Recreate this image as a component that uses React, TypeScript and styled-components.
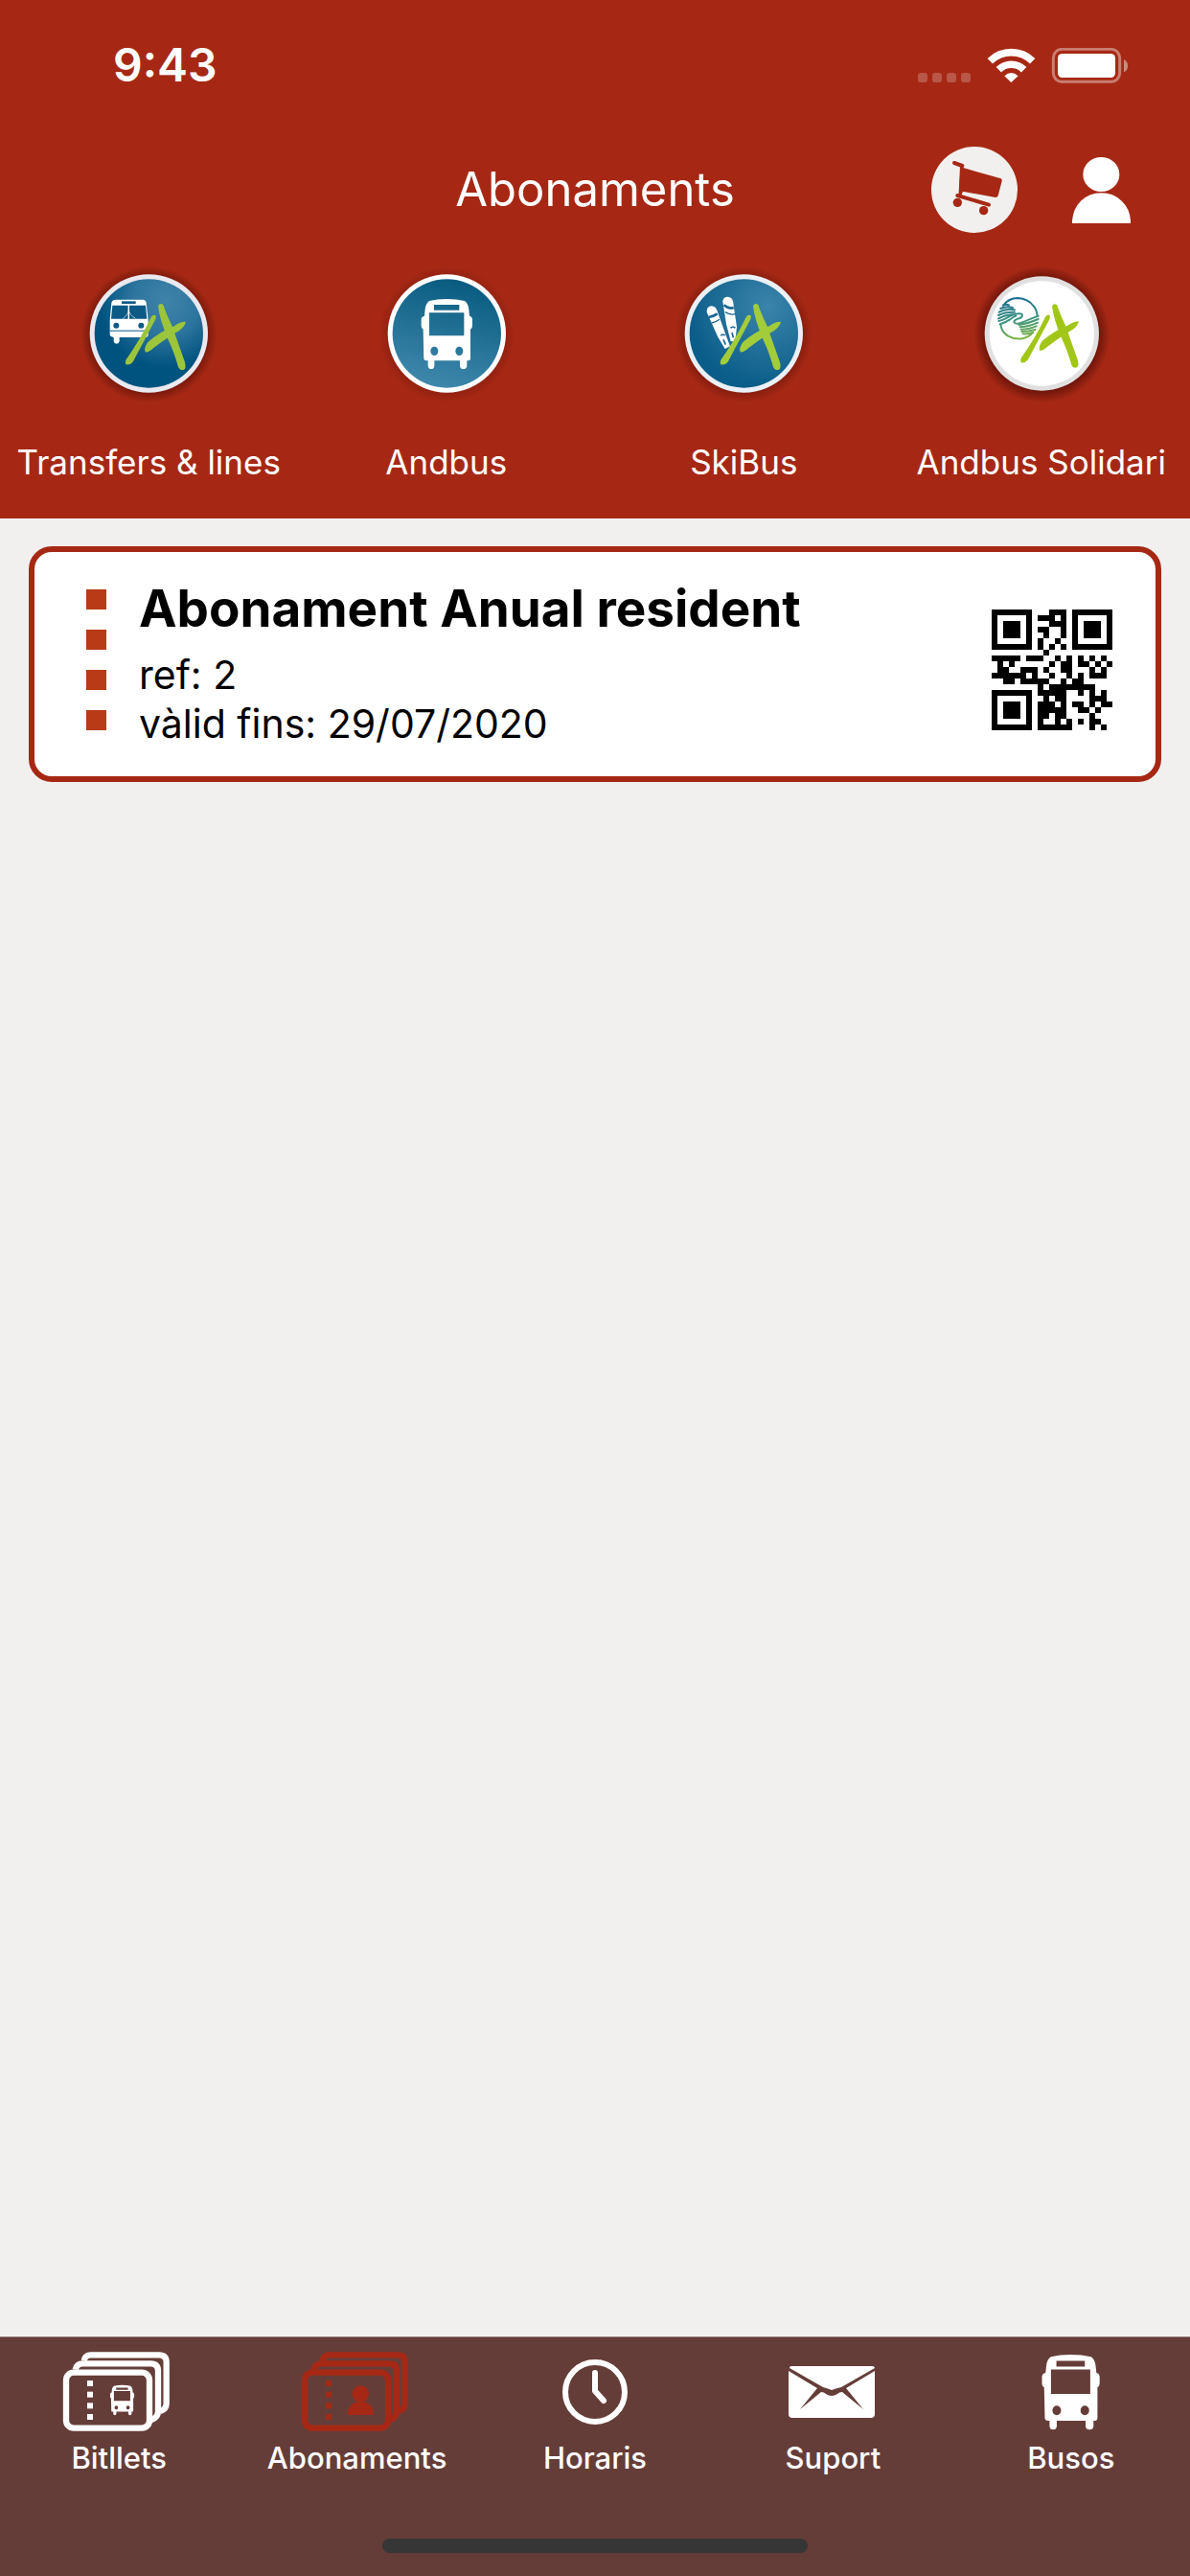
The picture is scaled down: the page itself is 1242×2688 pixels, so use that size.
import React from 'react';
import styled, { createGlobalStyle } from 'styled-components';

const red = '#a62814';
const paper = '#f1f0ee';
const green = '#9bc53b';

const GlobalStyle = createGlobalStyle`
  *, *::before, *::after { box-sizing: border-box; }
  body {
    margin: 0;
    background: ${paper};
    font-family: Inter, Roboto, "Liberation Sans", sans-serif;
  }
  h1, h2, p, ul { margin: 0; padding: 0; }
  button { font: inherit; color: inherit; border: 0; padding: 0; background: none; cursor: pointer; }
  a { color: inherit; text-decoration: none; }
  svg { display: block; flex: none; }
`;

const Screen = styled.div`
  display: flex;
  flex-direction: column;
  min-height: 100vh;
`;

const Header = styled.header`
  background: ${red};
  color: #fff;
`;

const StatusBar = styled.div`
  display: flex;
  align-items: center;
  justify-content: space-between;
  padding: 38px 65px 34px 118px;
`;

const Clock = styled.time`
  font-size: 48px;
  line-height: 60px;
  font-weight: 600;
`;

const NavBar = styled.div`
  display: grid;
  grid-template-columns: 1fr auto 1fr;
  align-items: center;
  height: 132px;
`;

const ScreenTitle = styled.h1`
  grid-column: 2;
  font-size: 49px;
  line-height: 60px;
  font-weight: 400;
`;

const Actions = styled.div`
  display: flex;
  align-items: center;
  justify-content: flex-end;
  gap: 57px;
  padding-right: 62px;
`;

const Services = styled.nav`
  display: grid;
  grid-template-columns: repeat(4, 1fr);
  padding: 12px 0 37px;
`;

const Service = styled.button`
  display: flex;
  flex-direction: column;
  align-items: center;
  gap: 40px;
  font-size: 35px;
  line-height: 44px;
  white-space: nowrap;
`;

const Content = styled.main`
  flex: 1;
  padding: 29px 30px;
`;

const Pass = styled.article`
  display: flex;
  align-items: flex-end;
  gap: 34px;
  padding: 27px 45px 29px 54px;
  background: #fff;
  border: 6px solid ${red};
  border-radius: 24px;
`;

const Perforation = styled.div`
  display: flex;
  flex-direction: column;
  gap: 21px;
  padding-bottom: 19px;
`;

const Hole = styled.span`
  width: 21px;
  height: 21px;
  background: #b83a17;
`;

const PassText = styled.div`
  flex: 1;
  font-size: 41px;
  line-height: 51px;
  color: #000;
`;

const PassTitle = styled.h2`
  margin-bottom: 12px;
  font-size: 53px;
  line-height: 64px;
  font-weight: 700;
`;

const PassCode = styled.div`
  padding-bottom: 19px;
`;

const Footer = styled.footer`
  display: flex;
  flex-direction: column;
  align-items: center;
  gap: 66px;
  padding: 15px 0 24px;
  border-top: 1px solid #9c8481;
  background: #653d38;
  color: #fff;
`;

const TabBar = styled.nav`
  display: grid;
  grid-template-columns: repeat(5, 1fr);
  width: 100%;
`;

const Tab = styled.a`
  display: flex;
  flex-direction: column;
  align-items: center;
  gap: 9px;
  font-size: 31px;
  line-height: 36px;
  font-weight: 500;
`;

const HomeIndicator = styled.div`
  width: 444px;
  height: 15px;
  border-radius: 8px;
  background: #363636;
`;

/* ---------- QR code, version 1, level L, mask 2 ---------- */

const QR_SIZE = 21;
const DATA_WORDS = 19;
const EC_WORDS = 7;
const FORMAT_BITS = '111110110101010';

function gfMultiply(a: number, b: number): number {
  let product = 0;
  for (let i = 7; i >= 0; i--) {
    product = (product << 1) ^ ((product >>> 7) * 0x11d);
    product ^= ((b >>> i) & 1) * a;
  }
  return product & 0xff;
}

function errorCorrection(data: number[]): number[] {
  const divisor: number[] = new Array(EC_WORDS).fill(0);
  divisor[EC_WORDS - 1] = 1;
  let root = 1;
  for (let i = 0; i < EC_WORDS; i++) {
    for (let j = 0; j < EC_WORDS; j++) {
      divisor[j] = gfMultiply(divisor[j], root);
      if (j + 1 < EC_WORDS) divisor[j] ^= divisor[j + 1];
    }
    root = gfMultiply(root, 2);
  }
  const rest: number[] = new Array(EC_WORDS).fill(0);
  data.forEach((word) => {
    const factor = word ^ (rest.shift() as number);
    rest.push(0);
    divisor.forEach((d, i) => {
      rest[i] ^= gfMultiply(d, factor);
    });
  });
  return rest;
}

const toBits = (n: number, length: number) => n.toString(2).padStart(length, '0');

function encodeQr(value: string): boolean[][] {
  const grid: (boolean | null)[][] = Array.from({ length: QR_SIZE }, () =>
    new Array(QR_SIZE).fill(null),
  );
  const last = QR_SIZE - 1;

  const finder = (cy: number, cx: number) => {
    for (let dy = -4; dy <= 4; dy++) {
      for (let dx = -4; dx <= 4; dx++) {
        const y = cy + dy;
        const x = cx + dx;
        if (y < 0 || x < 0 || y > last || x > last) continue;
        const ring = Math.max(Math.abs(dy), Math.abs(dx));
        grid[y][x] = ring !== 2 && ring !== 4;
      }
    }
  };
  finder(3, 3);
  finder(3, last - 3);
  finder(last - 3, 3);

  for (let i = 8; i <= 12; i++) {
    grid[6][i] = i % 2 === 0;
    grid[i][6] = i % 2 === 0;
  }

  const around = [0, 1, 2, 3, 4, 5, 7, 8];
  for (let i = 0; i < 15; i++) {
    const on = FORMAT_BITS[i] === '1';
    if (i < 8) grid[8][around[i]] = on;
    else grid[around[14 - i]][8] = on;
    if (i < 7) grid[last - i][8] = on;
    else grid[8][last - 14 + i] = on;
  }
  grid[13][8] = true;

  let bits = '0100' + toBits(value.length, 8);
  for (const ch of value) bits += toBits(ch.charCodeAt(0), 8);
  bits += '0000';
  const data: number[] = [];
  for (let i = 0; i + 8 <= bits.length; i += 8) data.push(parseInt(bits.slice(i, i + 8), 2));
  for (let pad = 0xec; data.length < DATA_WORDS; pad ^= 0xec ^ 0x11) data.push(pad);
  const stream = [...data, ...errorCorrection(data)].map((w) => toBits(w, 8)).join('');

  let index = 0;
  let upward = true;
  for (let right = last; right > 0; right -= 2) {
    if (right === 6) right = 5;
    for (let step = 0; step < QR_SIZE; step++) {
      const y = upward ? last - step : step;
      for (const x of [right, right - 1]) {
        if (grid[y][x] !== null) continue;
        const bit = stream[index++] === '1';
        grid[y][x] = x % 3 === 0 ? !bit : bit;
      }
    }
    upward = !upward;
  }
  return grid.map((row) => row.map(Boolean));
}

function QrCode({ value }: { value: string }) {
  const path = encodeQr(value)
    .flatMap((row, y) => row.map((on, x) => (on ? `M${x} ${y}h1v1h-1z` : '')))
    .join('');
  return (
    <svg
      width="126"
      height="126"
      viewBox="0 0 21 21"
      shapeRendering="crispEdges"
      role="img"
      aria-label="Codi QR"
    >
      <path d={path} />
    </svg>
  );
}

/* ---------- Icons ---------- */

function StatusIcons() {
  return (
    <svg width="219" height="37" viewBox="174 87 657 111" fill="#fff" aria-hidden="true">
      <g opacity="0.22">
        {[174, 219, 264, 309].map((x) => (
          <rect key={x} x={x} y="165" width="30" height="30" rx="10" />
        ))}
      </g>
      <g fill="none" stroke="#fff" strokeWidth="23">
        <path d="M400 128 A95 95 0 0 1 533 128" />
        <path d="M427 155 A56 56 0 0 1 506 155" />
      </g>
      <path d="M466 195 L445 175 Q466 155 488 175 Z" />
      <rect
        x="598"
        y="91"
        width="208"
        height="102"
        rx="27"
        fill="none"
        stroke="#fff"
        strokeWidth="9"
        opacity="0.4"
      />
      <rect x="612" y="105" width="180" height="75" rx="14" />
      <path d="M819 123 Q831 129 831 143 Q831 157 819 163 Z" opacity="0.45" />
    </svg>
  );
}

function CartIcon() {
  return (
    <svg width="90" height="90" viewBox="216 399 270 270" aria-hidden="true">
      <circle cx="351" cy="534" r="135" fill={paper} />
      <g fill={red}>
        <path d="M308 463 L434 499 Q438 501 437 507 L425 553 Q423 558 417 558 L318 540 Q313 539 311 548 L302 548 Z" />
        <circle cx="298" cy="574" r="14" />
        <circle cx="380" cy="599" r="14" />
      </g>
      <g fill="none" stroke={red} strokeLinecap="round" strokeLinejoin="round">
        <path d="M288 450 L313 459" strokeWidth="12" />
        <path d="M311 460 L307 545" strokeWidth="10" />
        <path d="M298 552 L396 581" strokeWidth="12" />
      </g>
    </svg>
  );
}

function PersonIcon() {
  return (
    <svg width="61" height="69" viewBox="657 429 183 207" fill="#fff" aria-hidden="true">
      <ellipse cx="748" cy="483" rx="57" ry="54" />
      <path d="M657 636 V628 Q660 590 684 566 Q712 541 748 541 Q786 541 812 566 Q838 590 840 628 V636 Z" />
    </svg>
  );
}

function BusShape() {
  return (
    <g>
      <path
        fillRule="evenodd"
        d="M399 190 Q401 170 412 163 Q436 157 467 157 Q498 157 523 163 Q534 170 536 190 L538 210 Q547 212 547 222 V240 Q547 250 541 252 V344 Q541 350 535 350 H530 V366 Q529 376 519 376 Q509 376 508 366 V350 H428 V366 Q427 376 418 376 Q409 376 408 366 V350 H402 Q396 350 395 344 L393 252 Q387 250 387 240 V222 Q387 212 397 210 Z
           M427 175 V192 H506 V175 Z
           M412 200 V272 H521 V200 Z
           M416 320 a12 14 0 1 0 24 0 a12 14 0 1 0 -24 0 Z
           M494 320 a12 14 0 1 0 24 0 a12 14 0 1 0 -24 0 Z"
      />
    </g>
  );
}

function Strokes({ color }: { color: string }) {
  return (
    <g fill={color}>
      <path d="M474 214 Q481 203 489 209 Q491 215 485 226 L417 354 Q408 365 395 362 Q391 356 396 346 Q440 285 474 214 Z" />
      <path d="M496 178 Q502 167 512 175 Q520 200 540 242 L580 355 Q585 376 575 379 Q564 381 559 369 Q545 320 528 285 Q500 220 496 178 Z" />
      <path d="M583 229 Q570 226 548 241 Q500 260 464 292 Q450 312 456 323 Q466 325 482 310 Q510 288 548 264 Q578 250 583 229 Z" />
    </g>
  );
}

type BadgeProps = {
  id: string;
  ring: string;
  radius?: number;
  fill: React.ReactNode;
  shade?: number;
  children: React.ReactNode;
};

function Badge({ id, ring, radius = 185, fill, shade = 0.5, children }: BadgeProps) {
  return (
    <svg width="144" height="144" viewBox="250 49 432 432" aria-hidden="true">
      <defs>
        <radialGradient id={`${id}-shade`}>
          <stop offset="0.8" stopColor="#300" stopOpacity={shade} />
          <stop offset="1" stopColor="#300" stopOpacity="0" />
        </radialGradient>
        {fill}
      </defs>
      <circle cx="467" cy="268" r="214" fill={`url(#${id}-shade)`} />
      <circle cx="467" cy="265" r={radius} fill={ring} />
      <circle cx="467" cy="265" r={radius - 15} fill={`url(#${id})`} />
      {children}
    </svg>
  );
}

function TransfersIcon() {
  return (
    <Badge
      id="transfers"
      ring="#e9e9ef"
      fill={
        <radialGradient id="transfers" cx="0.66" cy="0.2" r="0.62">
          <stop offset="0" stopColor="#3f83a9" />
          <stop offset="0.5" stopColor="#2d759e" />
          <stop offset="1" stopColor="#00527f" />
        </radialGradient>
      }
    >
      <path
        fill="#fff"
        d="M350 170 Q352 159 362 159 H448 Q458 159 459 170 L465 222 V270 Q463 277 456 277 H375 V290 Q373 297 366 297 Q358 297 357 290 V277 Q345 275 345 268 V222 Z"
      />
      <g fill="#0b5a86">
        <rect x="382" y="164" width="44" height="8" />
        <path d="M353 177 H402 V219 H349 Z M406 177 H457 L461 219 H406 Z" />
        <circle cx="365" cy="240" r="9" />
        <circle cx="443" cy="240" r="9" />
        <rect x="345" y="255" width="115" height="3" />
      </g>
      <path
        d="M404 180 V219 M404 190 Q402 208 385 219 M404 190 Q406 208 425 217"
        fill="none"
        stroke="#fff"
        strokeOpacity="0.6"
        strokeWidth="3"
      />
      <Strokes color={green} />
    </Badge>
  );
}

function AndbusIcon() {
  return (
    <Badge
      id="andbus"
      ring="#fff"
      shade={0.22}
      fill={
        <linearGradient id="andbus" x1="0.65" y1="0" x2="0.4" y2="1">
          <stop offset="0" stopColor="#075b7f" />
          <stop offset="1" stopColor="#3f88ac" />
        </linearGradient>
      }
    >
      <g fill="#fff">
        <BusShape />
      </g>
    </Badge>
  );
}

function SkiBusIcon() {
  return (
    <Badge
      id="skibus"
      ring="#eaf0f5"
      shade={0.35}
      fill={
        <radialGradient id="skibus" cx="0.72" cy="0.25" r="0.75">
          <stop offset="0" stopColor="#3b84ab" />
          <stop offset="1" stopColor="#0a5d89" />
        </radialGradient>
      }
    >
      <g fill="#fff">
        <path d="M351 198 Q350 180 366 179 Q378 180 383 192 L410 268 L424 305 L408 313 L386 276 Z" />
        <path d="M401 164 Q402 150 417 150 Q430 151 433 164 L445 245 L440 288 L426 290 L412 236 Z" />
      </g>
      <g fill="none" stroke="#1a6891">
        <path d="M357 214 Q372 212 384 203 M405 176 Q420 190 435 184" strokeWidth="8" />
        <path
          d="M366 232 Q380 230 391 221 M409 198 Q424 208 440 204"
          strokeWidth="4"
        />
        <path
          d="M395 272 Q402 264 408 272 M403 284 L410 300 M426 248 Q433 240 440 248 M430 262 L434 278"
          strokeWidth="5"
        />
      </g>
      <Strokes color="#a3cc3a" />
    </Badge>
  );
}

function SolidariIcon() {
  return (
    <Badge
      id="solidari"
      ring="#e1e0e0"
      radius={179}
      shade={0.55}
      fill={
        <linearGradient id="solidari">
          <stop stopColor="#fff" />
        </linearGradient>
      }
    >
      <defs>
        <linearGradient
          id="hands"
          gradientUnits="userSpaceOnUse"
          x1="380"
          y1="152"
          x2="400"
          y2="284"
        >
          <stop offset="0" stopColor="#1a6c93" />
          <stop offset="0.55" stopColor="#3d957e" />
          <stop offset="1" stopColor="#7fb542" />
        </linearGradient>
      </defs>
      <g
        fill="none"
        stroke="url(#hands)"
        strokeWidth="6"
        strokeLinecap="round"
        strokeLinejoin="round"
      >
        <path d="M346 178 Q362 154 392 154 Q424 156 440 178 Q452 190 453 212" />
        <path d="M338 236 Q340 258 360 272 Q384 286 410 280 Q430 274 438 262" />
        <path d="M346 176 Q356 173 364 176 M338 187 Q356 178 376 184 M333 198 Q356 186 382 191 M331 208 Q352 197 382 198 M331 218 Q350 208 374 206" />
        <path d="M332 226 Q350 222 372 208 Q392 200 404 204 Q410 212 396 218 Q380 222 380 230 Q388 238 402 232 Q434 218 456 210" />
        <path d="M336 236 Q352 232 366 222 Q376 214 386 210" />
        <path d="M456 220 Q430 232 396 238 M454 231 Q430 243 399 245 M450 242 Q430 251 402 252 M446 253 Q428 259 404 259 M440 262 Q426 267 408 266" />
      </g>
      <g transform="translate(23 8) scale(0.96)">
        <Strokes color="#a2c617" />
      </g>
    </Badge>
  );
}

const tabBox = { width: 120, height: 84, 'aria-hidden': true } as const;

function TicketsIcon({ color, children }: { color: string; children: React.ReactNode }) {
  return (
    <svg {...tabBox} viewBox="192 102 360 252">
      <g fill="none" stroke={color} strokeWidth="19">
        <path d="M263 130 Q266 112 285 112 H498 Q521 112 521 135 V264 Q521 282 502 288" />
        <path d="M236 158 Q240 139 259 139 H472 Q495 139 495 162 V288 Q495 308 474 315" />
        <rect x="207" y="167" width="261" height="174" rx="24" />
      </g>
      <g fill={color}>
        {[192, 227, 262, 297].map((y) => (
          <rect key={y} x="273" y={y} width="18" height="18" />
        ))}
        {children}
      </g>
    </svg>
  );
}

function ClockIcon() {
  return (
    <svg {...tabBox} viewBox="0 0 120 84" fill="none" stroke="#fff" strokeWidth="6">
      <circle cx="60" cy="42" r="31" />
      <path d="M60 22 V41 L69 51" strokeLinecap="round" strokeLinejoin="round" />
    </svg>
  );
}

function MailIcon() {
  return (
    <svg {...tabBox} viewBox="0 0 120 84" fill="#fff">
      <path d="M17 15 H101 Q104 15 104 17 L69 37 Q64 38 59 40 Q54 38 50 37 L15 17 Q15 15 17 15 Z" />
      <path d="M14 20 L44 38 L26 60 L48 42 Q51 42 53 44 Q59 48 65 44 Q67 42 70 42 L92 60 L74 38 L104 20 V65 Q104 69 100 69 H18 Q14 69 14 65 Z" />
    </svg>
  );
}

function BusIcon() {
  return (
    <svg {...tabBox} viewBox="0 0 120 84" fill="#fff">
      <g transform="translate(-116 -53) scale(0.376 0.357)">
        <BusShape />
      </g>
    </svg>
  );
}

const services = [
  { label: 'Transfers & lines', icon: <TransfersIcon /> },
  { label: 'Andbus', icon: <AndbusIcon /> },
  { label: 'SkiBus', icon: <SkiBusIcon /> },
  { label: 'Andbus Solidari', icon: <SolidariIcon /> },
];

const tabs = [
  {
    label: 'Bitllets',
    icon: (
      <TicketsIcon color="#fff">
        <g transform="translate(163 139) scale(0.47 0.43)">
          <BusShape />
        </g>
      </TicketsIcon>
    ),
  },
  {
    label: 'Abonaments',
    icon: (
      <TicketsIcon color={red}>
        <circle cx="382" cy="234" r="26" />
        <path d="M341 300 Q343 259 382 259 Q421 259 423 300 Z" />
      </TicketsIcon>
    ),
  },
  { label: 'Horaris', icon: <ClockIcon /> },
  { label: 'Suport', icon: <MailIcon /> },
  { label: 'Busos', icon: <BusIcon /> },
];

export default function App() {
  return (
    <Screen>
      <GlobalStyle />
      <Header>
        <StatusBar>
          <Clock>9:43</Clock>
          <StatusIcons />
        </StatusBar>
        <NavBar>
          <ScreenTitle>Abonaments</ScreenTitle>
          <Actions>
            <button type="button" aria-label="Cistella">
              <CartIcon />
            </button>
            <button type="button" aria-label="Perfil">
              <PersonIcon />
            </button>
          </Actions>
        </NavBar>
        <Services aria-label="Serveis">
          {services.map(({ label, icon }) => (
            <Service key={label} type="button">
              {icon}
              <span>{label}</span>
            </Service>
          ))}
        </Services>
      </Header>

      <Content>
        <Pass>
          <Perforation aria-hidden="true">
            <Hole />
            <Hole />
            <Hole />
            <Hole />
          </Perforation>
          <PassText>
            <PassTitle>Abonament Anual resident</PassTitle>
            <p>ref: 2</p>
            <p>vàlid fins: 29/07/2020</p>
          </PassText>
          <PassCode>
            <QrCode value="Acosta el WQR" />
          </PassCode>
        </Pass>
      </Content>

      <Footer>
        <TabBar aria-label="Seccions">
          {tabs.map(({ label, icon }) => (
            <Tab key={label} href="#" aria-current={label === 'Abonaments' ? 'page' : undefined}>
              {icon}
              <span>{label}</span>
            </Tab>
          ))}
        </TabBar>
        <HomeIndicator />
      </Footer>
    </Screen>
  );
}
